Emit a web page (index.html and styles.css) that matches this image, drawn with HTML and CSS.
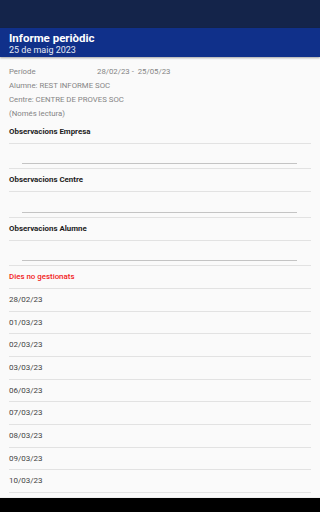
FILE: index.html
```html
<!DOCTYPE html>
<html lang="ca">
<head>
<meta charset="utf-8">
<meta name="viewport" content="width=device-width, initial-scale=1">
<link rel="stylesheet" href="styles.css">
</head>
<body>
<div class="screen">
  <div class="status"></div>
  <header class="appbar">
    <div class="title">Informe periòdic</div>
    <div class="subtitle">25 de maig 2023</div>
  </header>
  <main class="content">
    <div class="info">
      <div class="info-row"><span class="label">Període</span><span class="dates">28/02/23 -&nbsp; 25/05/23</span></div>
      <div class="info-row">Alumne: REST INFORME SOC</div>
      <div class="info-row">Centre: CENTRE DE PROVES SOC</div>
      <div class="info-row">(Només lectura)</div>
    </div>
    <div class="sec-title">Observacions Empresa</div>
    <div class="input-area"><div class="underline"></div></div>
    <div class="sec-title">Observacions Centre</div>
    <div class="input-area"><div class="underline"></div></div>
    <div class="sec-title">Observacions Alumne</div>
    <div class="input-area"><div class="underline"></div></div>
    <div class="sec-title red">Dies no gestionats</div>
    <div class="day">28/02/23</div>
    <div class="day">01/03/23</div>
    <div class="day">02/03/23</div>
    <div class="day">03/03/23</div>
    <div class="day">06/03/23</div>
    <div class="day">07/03/23</div>
    <div class="day">08/03/23</div>
    <div class="day">09/03/23</div>
    <div class="day">10/03/23</div>
  </main>
  <div class="navbar"></div>
</div>
</body>
</html>
```
FILE: styles.css
```css
html, body {
  margin: 0;
  padding: 0;
}
body {
  background: #fafafa;
  font-family: Roboto, "Noto Sans", "Liberation Sans", sans-serif;
}
.screen {
  width: 100%;
  height: 512px;
  display: flex;
  flex-direction: column;
  overflow: hidden;
}
.status {
  height: 28px;
  flex: none;
  background: #14244a;
}
.appbar {
  height: 29px;
  flex: none;
  background: #10308a;
  color: #fff;
  padding: 3px 9px 0;
  box-sizing: border-box;
  box-shadow: 0 1px 2px rgba(0, 0, 0, 0.35);
  position: relative;
  z-index: 1;
}
.title {
  font-size: 11.5px;
  font-weight: bold;
  line-height: 14px;
}
.subtitle {
  font-size: 9px;
  line-height: 11px;
  color: #e4e8f4;
}
.content {
  flex: 1;
  overflow: hidden;
  padding: 0 9px;
}
.info {
  padding-top: 8px;
  font-size: 7.8px;
  color: #858585;
}
.info-row {
  height: 14px;
  line-height: 14px;
  white-space: nowrap;
}
.label {
  display: inline-block;
  width: 88px;
}
.sec-title {
  height: 21.7px;
  line-height: 21.7px;
  font-size: 7.9px;
  font-weight: bold;
  color: #1c1c1c;
  border-bottom: 1px solid #e2e2e2;
}
.sec-title.red {
  color: #f21c1c;
  font-weight: 500;
}
.input-area {
  height: 20.8px;
  border-bottom: 1px solid #e2e2e2;
  display: flex;
  flex-direction: column;
  justify-content: flex-end;
  padding: 0 14px 4px 13px;
}
.underline {
  height: 1px;
  background: #c4c4c4;
}
.day {
  height: 21.65px;
  line-height: 21.65px;
  font-size: 8px;
  color: #444;
  border-bottom: 1px solid #e2e2e2;
}
.navbar {
  height: 14px;
  flex: none;
  background: #000;
  border-top: 1px solid #f0f0f0;
}
```
